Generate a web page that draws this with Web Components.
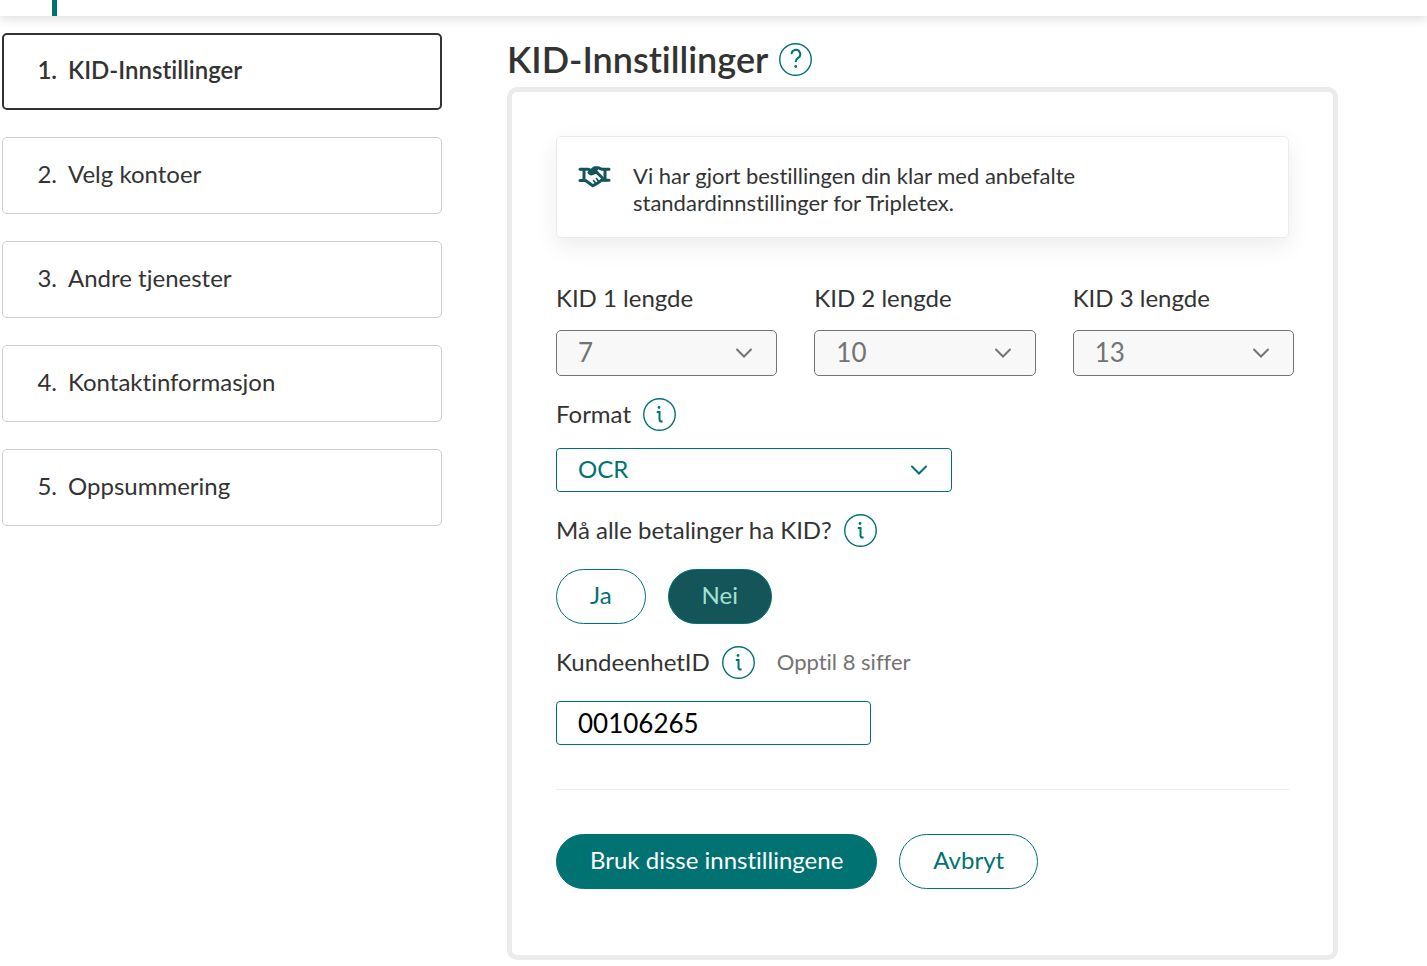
<!DOCTYPE html>
<html lang="no">
<head>
  <meta charset="utf-8">
  <meta name="viewport" content="width=device-width, initial-scale=1">
  <title>KID-Innstillinger</title>
  <style>
    :root {
      --green: #007272;
      --dark-green: #14555a;
      --mint: #a5e1d2;
      --text: #333;
      --muted: #737373;
      --line: #ebebeb;
    }
    body {
      margin: 0;
      background: #fff;
      color: var(--text);
      font-family: Lato, "Open Sans", sans-serif;
      font-size: 24px;
      line-height: 32px;
      font-variant-ligatures: none;
    }
  </style>
</head>
<body>
  <kid-page>
    <kid-topbar slot="top"></kid-topbar>
    <kid-steps slot="steps">
      <kid-step number="1" current>KID-Innstillinger</kid-step>
      <kid-step number="2">Velg kontoer</kid-step>
      <kid-step number="3">Andre tjenester</kid-step>
      <kid-step number="4">Kontaktinformasjon</kid-step>
      <kid-step number="5">Oppsummering</kid-step>
    </kid-steps>
    <kid-heading>KID-Innstillinger</kid-heading>
    <kid-panel>
      <kid-notice>Vi har gjort bestillingen din klar med anbefalte standardinnstillinger for Tripletex.</kid-notice>
      <kid-columns>
        <kid-select label="KID 1 lengde" value="7" disabled></kid-select>
        <kid-select label="KID 2 lengde" value="10" disabled></kid-select>
        <kid-select label="KID 3 lengde" value="13" disabled></kid-select>
      </kid-columns>
      <kid-select label="Format" value="OCR" info></kid-select>
      <kid-toggle label="Må alle betalinger ha KID?" options="Ja,Nei" value="Nei"></kid-toggle>
      <kid-input label="KundeenhetID" value="00106265" hint="Opptil 8 siffer"></kid-input>
      <kid-actions slot="actions">
        <kid-button variant="primary">Bruk disse innstillingene</kid-button>
        <kid-button>Avbryt</kid-button>
      </kid-actions>
    </kid-panel>
  </kid-page>

  <script>
    class KidElement extends HTMLElement {
      constructor() {
        super();
        this.attachShadow({mode: 'open'});
      }
      get label() {
        return this.getAttribute('label');
      }
      get value() {
        return this.getAttribute('value');
      }
      connectedCallback() {
        this.shadowRoot.innerHTML = this.template();
      }
    }

    class KidPage extends KidElement {
      template() {
        return `
          <style>
            :host { display: block; }
            .layout {
              display: grid;
              grid-template-columns: minmax(260px, 440fr) minmax(0, 831fr);
              gap: 65px;
              padding: 16px 89px 6px 2px;
            }
          </style>
          <header><slot name="top"></slot></header>
          <div class="layout">
            <aside><slot name="steps"></slot></aside>
            <main><slot></slot></main>
          </div>
        `;
      }
    }

    class KidTopbar extends KidElement {
      template() {
        return `
          <style>
            :host {
              display: flex;
              height: 16px;
              padding-left: 52px;
              background: #fff;
              box-shadow: 0 2px 12px rgba(0,0,0,0.16);
            }
            .marker { width: 5px; background: var(--green); }
          </style>
          <div class="marker"></div>
        `;
      }
    }

    class KidSteps extends KidElement {
      template() {
        return `
          <style>
            :host { display: block; }
            nav {
              display: flex;
              flex-direction: column;
              gap: 27px;
              padding-top: 1px;
            }
          </style>
          <nav aria-label="Steg"><slot></slot></nav>
        `;
      }
    }

    class KidStep extends KidElement {
      template() {
        return `
          <style>
            :host { display: block; }
            a {
              display: flex;
              align-items: center;
              gap: 11px;
              box-sizing: border-box;
              height: 77px;
              padding: 0 32px 4px;
              border: 1px solid #ccc;
              border-radius: 5px;
              background: #fff;
              color: inherit;
              text-decoration: none;
            }
            .number { min-width: 22px; text-align: right; }
            :host([current]) a {
              padding: 0 31px 4px;
              border: 2px solid var(--text);
              font-weight: 600;
            }
          </style>
          <a href="#" ${this.hasAttribute('current') ? 'aria-current="step"' : ''}>
            <span class="number">${this.getAttribute('number')}.</span>
            <slot></slot>
          </a>
        `;
      }
    }

    // round icon button, "info" or "question"
    class KidHelp extends KidElement {
      template() {
        const glyphs = {
          info: `<path d="M13.8 14h2.700v7.500c0 1.400.7 2.100 2.100 2.100h1"/><circle class="dot" cx="16" cy="9.500" r="1.400"/>`,
          question: `<path d="M12.600 11.300a4.300 4.300 0 1 1 6.500 3.500c-1.700 1.100-2.400 2-2.400 4.200"/><circle class="dot" cx="16.700" cy="23.500" r="1.400"/>`
        };
        return `
          <style>
            :host { display: block; }
            button {
              display: block;
              padding: 0;
              border: 0;
              background: none;
              color: var(--green);
              cursor: pointer;
            }
            svg {
              display: block;
              fill: none;
              stroke: currentColor;
              stroke-width: 2;
            }
            .ring { stroke-width: 1.4; }
            .dot { fill: currentColor; stroke: none; }
          </style>
          <button type="button" aria-label="Hjelp">
            <svg width="33" height="33" viewBox="0 0 33 33">
              <circle class="ring" cx="16.5" cy="16.5" r="15.75"/>
              ${glyphs[this.getAttribute('icon')] || glyphs.info}
            </svg>
          </button>
        `;
      }
    }

    class KidHeading extends KidElement {
      template() {
        return `
          <style>
            :host {
              display: flex;
              align-items: center;
              gap: 11px;
              height: 55px;
            }
            h1 {
              margin: 0;
              font-size: 36px;
              font-weight: 600;
              line-height: 55px;
            }
          </style>
          <h1><slot></slot></h1>
          <kid-help icon="question"></kid-help>
        `;
      }
    }

    class KidPanel extends KidElement {
      template() {
        return `
          <style>
            :host {
              display: block;
              padding: 44px 44px 66px;
              border: 5px solid var(--line);
              border-radius: 10px;
            }
            form {
              display: flex;
              flex-direction: column;
              gap: 22px;
            }
            footer {
              margin-top: 22px;
              padding-top: 44px;
              border-top: 1px solid var(--line);
            }
          </style>
          <form>
            <slot></slot>
            <footer><slot name="actions"></slot></footer>
          </form>
        `;
      }
    }

    class KidNotice extends KidElement {
      template() {
        return `
          <style>
            :host {
              display: flex;
              align-items: flex-start;
              gap: 22px;
              margin-bottom: 22px;
              padding: 25px 21px 21px;
              border: 1px solid var(--line);
              border-radius: 5px;
              background: #fff;
              box-shadow: 0 8px 24px rgba(0,0,0,0.08);
            }
            svg {
              flex: none;
              margin-top: 4px;
              fill: none;
              stroke: var(--dark-green);
              stroke-linecap: round;
              stroke-linejoin: round;
            }
            p {
              max-width: 460px;
              margin: 0;
              font-size: 22px;
              line-height: 27px;
            }
          </style>
          <svg width="33" height="22" viewBox="0 0 33 22" stroke-width="3" aria-hidden="true">
            <path d="M2 3.3h8.5l3 1M31 3.3h-7l-4-1.6h-3.5l-5.5 4.6c.8 2.2 3.2 2 5 .6l2-1.2 6.5 6.3"/>
            <path d="M6 3.5v11M27 3.5v11M2 14.5h5.5l7.3 5.2 3-1.6 3-1.8 2.6-2.1H31"/>
            <path d="M12.5 4l5-1.5 2.5 1-4.5 3.5h-3z" fill="#14555a" stroke-width="1"/>
            <path d="M15.5 14.5l2.5 3M18.5 12.5l2.5 3.5" stroke-width="1.6"/>
          </svg>
          <p><slot></slot></p>
        `;
      }
    }

    class KidColumns extends KidElement {
      template() {
        return `
          <style>
            :host {
              display: grid;
              grid-template-columns: repeat(3, 1fr);
              gap: 37px;
              margin-right: -5px;
            }
          </style>
          <slot></slot>
        `;
      }
    }

    const fieldStyles = `
      :host { display: block; }
      .head {
        display: flex;
        align-items: center;
        height: 33px;
        margin-bottom: 17px;
        gap: 12px;
      }
      label, #label, .hint { padding-bottom: 2px; }
      .hint {
        margin-left: 10px;
        color: var(--muted);
        font-size: 22px;
      }
    `;

    class KidSelect extends KidElement {
      template() {
        return `
          <style>
            ${fieldStyles}
            .box {
              display: grid;
              align-items: center;
              max-width: 396px;
              color: var(--green);
            }
            select, svg { grid-area: 1 / 1; }
            select {
              appearance: none;
              box-sizing: border-box;
              width: 100%;
              height: 44px;
              padding: 0 55px 2px 21px;
              border: 1px solid currentColor;
              border-radius: 4px;
              background: #fff;
              color: inherit;
              font: inherit;
              opacity: 1;
            }
            svg {
              justify-self: end;
              margin-right: 24px;
              fill: none;
              stroke: currentColor;
              stroke-width: 2;
              stroke-linecap: round;
              pointer-events: none;
            }
            :host([disabled]) .head { margin-bottom: 15px; }
            :host([disabled]) .box { color: var(--muted); }
            :host([disabled]) select {
              height: 46px;
              border-radius: 5px;
              background: #f8f8f8;
              font-size: 26px;
            }
          </style>
          <div class="head">
            <label for="field">${this.label}</label>
            ${this.hasAttribute('info') ? '<kid-help icon="info"></kid-help>' : ''}
          </div>
          <div class="box">
            <select id="field" ${this.hasAttribute('disabled') ? 'disabled' : ''}>
              <option>${this.value}</option>
            </select>
            <svg width="18" height="12" viewBox="0 0 18 12" aria-hidden="true"><path d="M2 2.5l7 7 7-7"/></svg>
          </div>
        `;
      }
    }

    class KidToggle extends KidElement {
      template() {
        const options = this.getAttribute('options').split(',');
        return `
          <style>
            ${fieldStyles}
            .head { margin-bottom: 22px; }
            .options { display: flex; gap: 22px; }
          </style>
          <div class="head">
            <span id="label">${this.label}</span>
            <kid-help icon="info"></kid-help>
          </div>
          <div class="options" role="group" aria-labelledby="label">
            ${options.map(o => `<kid-button ${o === this.value ? 'variant="selected"' : ''}>${o}</kid-button>`).join('')}
          </div>
        `;
      }
      connectedCallback() {
        super.connectedCallback();
        const buttons = [...this.shadowRoot.querySelectorAll('kid-button')];
        buttons.forEach(button => button.addEventListener('click', () => {
          buttons.forEach(b => b.removeAttribute('variant'));
          button.setAttribute('variant', 'selected');
        }));
      }
    }

    class KidInput extends KidElement {
      template() {
        return `
          <style>
            ${fieldStyles}
            .head { margin-bottom: 22px; }
            input {
              display: block;
              box-sizing: border-box;
              width: 100%;
              max-width: 315px;
              height: 44px;
              padding: 0 21px;
              border: 1px solid var(--green);
              border-radius: 4px;
              background: #fff;
              color: #000;
              font: inherit;
              font-size: 26px;
            }
          </style>
          <div class="head">
            <label for="field">${this.label}</label>
            <kid-help icon="info"></kid-help>
            <span class="hint" id="hint">${this.getAttribute('hint')}</span>
          </div>
          <input id="field" type="text" inputmode="numeric" maxlength="8" aria-describedby="hint" value="${this.value}">
        `;
      }
    }

    class KidButton extends KidElement {
      template() {
        return `
          <style>
            :host { display: block; }
            button {
              display: block;
              height: 55px;
              padding: 0 33px 3px;
              border: 1px solid var(--green);
              border-radius: 28px;
              background: #fff;
              color: var(--green);
              font: inherit;
              cursor: pointer;
            }
            :host([variant="primary"]) button {
              background: var(--green);
              color: #fff;
            }
            :host([variant="selected"]) button {
              background: var(--dark-green);
              color: var(--mint);
            }
          </style>
          <button type="button"><slot></slot></button>
        `;
      }
    }

    class KidActions extends KidElement {
      template() {
        return `
          <style>
            :host { display: flex; flex-wrap: wrap; gap: 22px; }
          </style>
          <slot></slot>
        `;
      }
    }

    customElements.define('kid-page', KidPage);
    customElements.define('kid-topbar', KidTopbar);
    customElements.define('kid-steps', KidSteps);
    customElements.define('kid-step', KidStep);
    customElements.define('kid-help', KidHelp);
    customElements.define('kid-heading', KidHeading);
    customElements.define('kid-panel', KidPanel);
    customElements.define('kid-notice', KidNotice);
    customElements.define('kid-columns', KidColumns);
    customElements.define('kid-select', KidSelect);
    customElements.define('kid-toggle', KidToggle);
    customElements.define('kid-input', KidInput);
    customElements.define('kid-button', KidButton);
    customElements.define('kid-actions', KidActions);
  </script>
</body>
</html>
